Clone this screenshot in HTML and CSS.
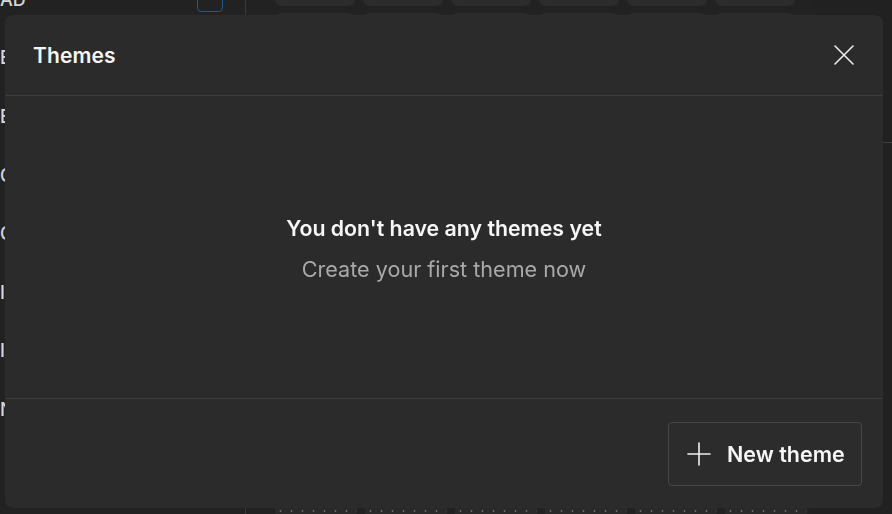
FILE: index.html
```html
<!DOCTYPE html>
<html lang="en">
<head>
<meta charset="utf-8">
<title>Themes</title>
<link rel="stylesheet" href="styles.css">
</head>
<body>
<div class="app">
  <aside class="sidebar">
    <ul class="side-list">
      <li class="side-item"><span>AD</span><span class="check"></span></li>
      <li class="side-item"><span>Edit</span></li>
      <li class="side-item"><span>Export</span></li>
      <li class="side-item"><span>Copy</span></li>
      <li class="side-item"><span>Clone</span></li>
      <li class="side-item"><span>II</span></li>
      <li class="side-item"><span>II</span></li>
      <li class="side-item"><span>New</span></li>
    </ul>
  </aside>
  <main class="main">
    <div class="content">
      <div class="pill-row top">
        <div class="pill"></div><div class="pill"></div><div class="pill"></div>
        <div class="pill"></div><div class="pill"></div><div class="pill"></div>
      </div>
      <div class="pill-row second">
        <div class="pill"></div><div class="pill"></div><div class="pill"></div>
        <div class="pill"></div><div class="pill"></div><div class="pill"></div>
      </div>
      <div class="card-row">
        <div class="card"></div>
        <div class="card"></div>
        <div class="card"></div>
        <div class="card"></div>
        <div class="card"></div>
        <div class="card"></div>
      </div>
    </div>
    <div class="right-panel"><div class="right-head"></div></div>
  </main>
</div>

<div class="modal" role="dialog" aria-labelledby="modal-title">
  <header class="modal-header">
    <h2 class="modal-title" id="modal-title">Themes</h2>
    <button class="close-btn" aria-label="Close">
      <svg width="20" height="20" viewBox="0 0 20 20" fill="none" stroke="#ececec" stroke-width="1.6" stroke-linecap="round">
        <path d="M1 1 L19 19 M19 1 L1 19"/>
      </svg>
    </button>
  </header>
  <section class="modal-body">
    <p class="empty-title">You don't have any themes yet</p>
    <p class="empty-sub">Create your first theme now</p>
  </section>
  <footer class="modal-footer">
    <button class="new-btn">
      <svg width="24" height="24" viewBox="0 0 24 24" fill="none" stroke="#f0f0f0" stroke-width="1.6" stroke-linecap="round">
        <path d="M12 1 V23 M1 12 H23"/>
      </svg>
      <span>New theme</span>
    </button>
  </footer>
</div>
</body>
</html>
```

FILE: styles.css
```css
* { box-sizing: border-box; }

html, body {
  margin: 0;
  padding: 0;
  height: 100%;
  overflow: hidden;
}

body {
  background: #222222;
  font-family: Inter, "Noto Sans", sans-serif;
  color: #e8e8e8;
}

.app {
  display: flex;
  height: 100vh;
}

.sidebar {
  width: 246px;
  flex: none;
  border-right: 1px solid #3a3a3a;
  overflow: hidden;
}

.side-list {
  list-style: none;
  margin: -30px 0 0 0;
  padding: 0;
}

.side-item {
  display: flex;
  align-items: center;
  justify-content: space-between;
  height: 58.6px;
  font-size: 18px;
  font-weight: 500;
  color: #d6d6d6;
  padding-right: 22px;
}

.check {
  width: 26px;
  height: 26px;
  border: 1.5px solid #1e5b8c;
  border-radius: 4px;
  margin-top: -1px;
}

.main {
  flex: 1;
  display: flex;
  min-width: 0;
}

.content {
  flex: 1;
  display: flex;
  flex-direction: column;
  padding-left: 29px;
}

.pill-row {
  display: flex;
  gap: 8px;
}

.pill-row.top {
  margin-top: -20px;
  height: 26px;
}

.pill-row.second {
  margin-top: 7px;
  height: 30px;
}

.pill {
  width: 80px;
  height: 100%;
  background: #2c2c2c;
  border-radius: 7px;
}

.card-row {
  margin-top: auto;
  height: 6px;
  display: flex;
  gap: 8px;
  overflow: hidden;
}

.card {
  width: 82px;
  height: 40px;
  background-color: #2a2a2a;
  background-image: radial-gradient(circle, #6a6a6a 0.8px, transparent 1.2px);
  background-size: 11px 4px;
  background-position: 22px 1px;
  background-repeat: repeat-x;
  flex: none;
}

.right-panel {
  width: 78px;
  flex: none;
  background: #212121;
}

.right-head {
  height: 143px;
  border-bottom: 1px solid #3e3e3e;
}

/* Modal overlay */
.modal {
  position: fixed;
  left: 5px;
  top: 15px;
  width: 878px;
  height: 493px;
  background: #2b2b2b;
  border-radius: 8px;
  display: flex;
  flex-direction: column;
}

.modal-header {
  height: 81px;
  flex: none;
  display: flex;
  align-items: center;
  justify-content: space-between;
  padding: 0 29px 0 28px;
  border-bottom: 1px solid #3d3d3d;
}

.modal-title {
  margin: 0;
  font-size: 21px;
  font-weight: 600;
  color: #f6f6f6;
  letter-spacing: 0.1px;
}

.close-btn {
  background: none;
  border: none;
  padding: 0;
  width: 20px;
  height: 20px;
  display: flex;
  cursor: pointer;
}

.modal-body {
  flex: 1;
  display: flex;
  flex-direction: column;
  align-items: center;
  justify-content: center;
  gap: 15px;
  padding-top: 2px;
}

.modal-body p {
  margin: 0;
}

.empty-title {
  font-size: 21.3px;
  font-weight: 600;
  color: #f6f6f6;
}

.empty-sub {
  font-size: 21.6px;
  font-weight: 400;
  color: #a9a9a9;
}

.modal-footer {
  height: 110px;
  flex: none;
  display: flex;
  justify-content: flex-end;
  align-items: flex-start;
  padding: 23px 21px 0 0;
  border-top: 1px solid #3d3d3d;
}

.new-btn {
  display: flex;
  align-items: center;
  gap: 16px;
  height: 64px;
  width: 194px;
  padding: 0 0 0 18px;
  background: #2c2c2c;
  border: 1px solid #474747;
  border-radius: 4px;
  font-family: Inter, "Noto Sans", sans-serif;
  font-size: 21.5px;
  font-weight: 600;
  color: #f6f6f6;
  cursor: pointer;
}
```
